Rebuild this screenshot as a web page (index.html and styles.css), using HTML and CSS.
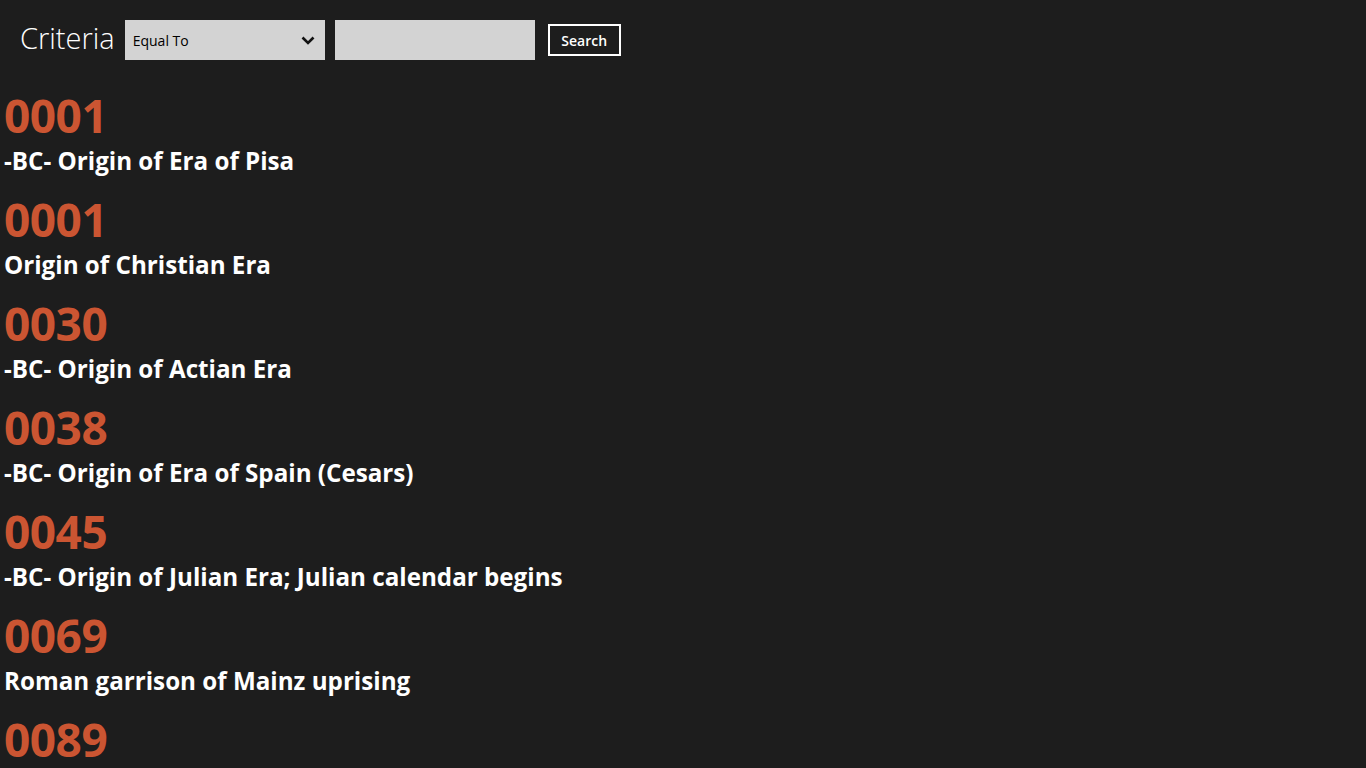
FILE: index.html
```html
<!DOCTYPE html>
<html>
<head>
<meta charset="utf-8">
<link rel="stylesheet" href="styles.css">
</head>
<body>
<div class="header">
  <span class="label">Criteria</span>
  <div class="select">
    <span>Equal To</span>
    <svg class="chev" width="14" height="9" viewBox="0 0 14 9"><path d="M1.5 1.5 L7 7 L12.5 1.5" fill="none" stroke="#111" stroke-width="2.6"/></svg>
  </div>
  <div class="input"></div>
  <button class="btn">Search</button>
</div>
<div class="list">
  <div class="item"><div class="year">0001</div><div class="desc">-BC- Origin of Era of Pisa</div></div>
  <div class="item"><div class="year">0001</div><div class="desc">Origin of Christian Era</div></div>
  <div class="item"><div class="year">0030</div><div class="desc">-BC- Origin of Actian Era</div></div>
  <div class="item"><div class="year">0038</div><div class="desc">-BC- Origin of Era of Spain (Cesars)</div></div>
  <div class="item"><div class="year">0045</div><div class="desc">-BC- Origin of Julian Era; Julian calendar begins</div></div>
  <div class="item"><div class="year">0069</div><div class="desc">Roman garrison of Mainz uprising</div></div>
  <div class="item last"><div class="year">0089</div></div>
</div>
</body>
</html>
```
FILE: styles.css
```css
html, body { margin: 0; padding: 0; }
body {
  background: #1d1d1d;
  color: #fff;
  font-family: "Open Sans", "Noto Sans", sans-serif;
  width: 1366px;
  height: 768px;
  overflow: hidden;
}
.header {
  display: flex;
  align-items: center;
  height: 40px;
  padding: 20px 0 0 20px;
}
.label {
  font-size: 29px;
  font-weight: 300;
  margin-right: 10px;
  position: relative;
  top: -3px;
}
.select {
  width: 200px;
  height: 40px;
  background: #d3d3d3;
  color: #000;
  display: flex;
  align-items: center;
  justify-content: space-between;
  box-sizing: border-box;
  padding: 0 10px 0 8px;
  font-size: 14px;
}
.chev { display: block; }
.input {
  width: 200px;
  height: 40px;
  background: #d3d3d3;
  margin-left: 10px;
}
.btn {
  margin-left: 13px;
  width: 73px;
  height: 32px;
  background: transparent;
  border: 2px solid #fff;
  color: #fff;
  font-family: "Open Sans", sans-serif;
  font-weight: 600;
  font-size: 14px;
  padding: 0;
}
.list {
  padding: 29px 0 0 4px;
  height: 679px;
  overflow: hidden;
}
.item { height: 92px; margin-bottom: 12px; }
.year {
  color: #cb5532;
  font-weight: 700;
  font-size: 46px;
  line-height: 52px;
  letter-spacing: -0.5px;
}
.desc {
  font-weight: 700;
  font-size: 24.2px;
  line-height: 40px;
}
```
